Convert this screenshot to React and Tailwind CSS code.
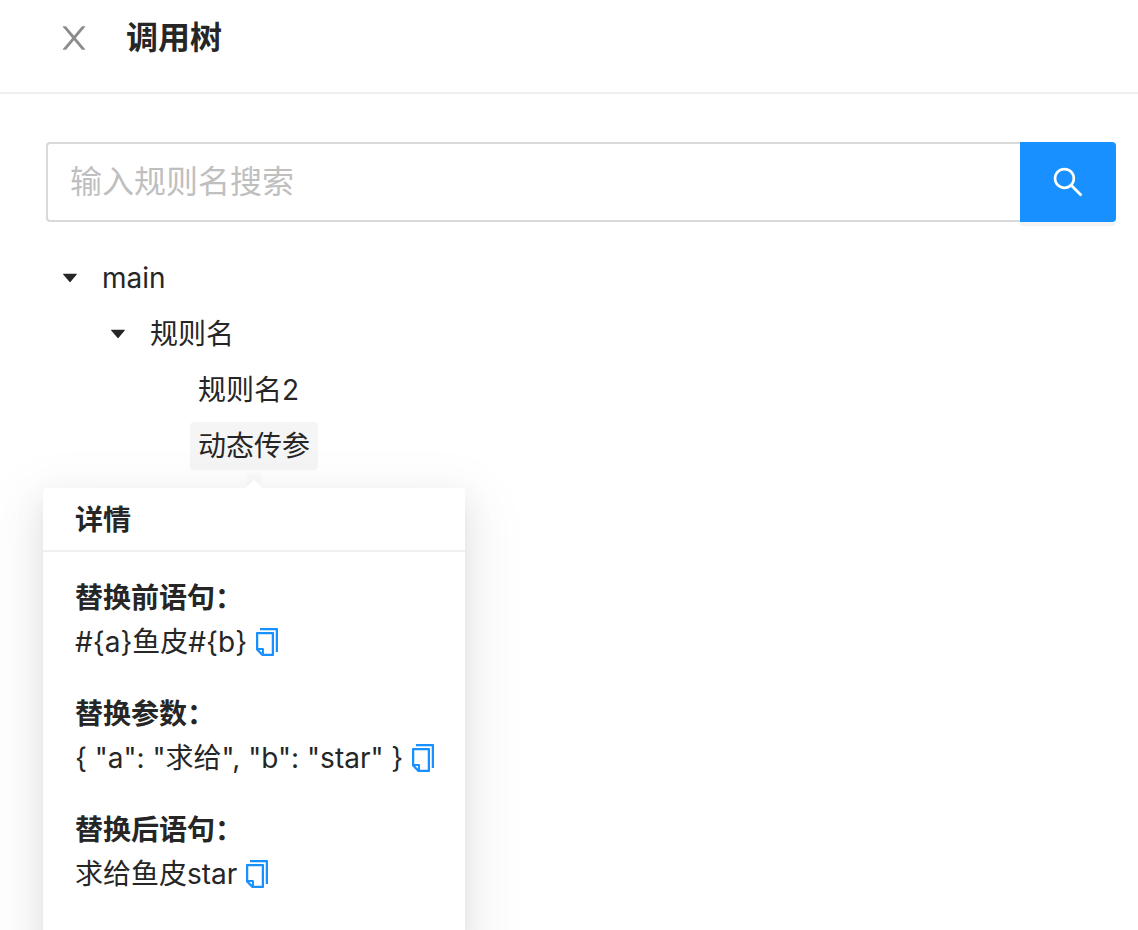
import React, { useState } from 'react';

const treeData = [
  {
    key: 'main',
    title: 'main',
    children: [
      {
        key: 'rule',
        title: '规则名',
        children: [
          { key: 'rule2', title: '规则名2' },
          {
            key: 'dynamic',
            title: '动态传参',
            detail: [
              { label: '替换前语句：', value: '#{a}鱼皮#{b}' },
              { label: '替换参数：', value: '{ "a": "求给", "b": "star" }' },
              { label: '替换后语句：', value: '求给鱼皮star' },
            ],
          },
        ],
      },
    ],
  },
];

function Icon({ d, viewBox = '64 64 896 896', className }) {
  return (
    <svg viewBox={viewBox} fill="currentColor" aria-hidden="true" className={className}>
      <path d={d} />
    </svg>
  );
}

const closePath = 'M563.8 512l262.5-312.9c4.4-5.2.7-13.1-6.1-13.1h-79.8c-4.7 0-9.2 2.1-12.3 5.7L511.6 449.8 295.1 191.7c-3-3.6-7.5-5.7-12.3-5.7H203c-6.8 0-10.5 7.9-6.1 13.1L459.4 512 196.9 824.9A7.95 7.95 0 0 0 203 838h79.8c4.7 0 9.2-2.1 12.3-5.7l216.5-258.1 216.5 258.1c3 3.6 7.5 5.7 12.3 5.7h79.8c6.8 0 10.5-7.9 6.1-13.1L563.8 512z';
const searchPath = 'M909.6 854.5L649.9 594.8C690.2 542.7 712 479 712 412c0-80.2-31.3-155.4-87.9-212.1-56.6-56.7-132-87.9-212.1-87.9s-155.5 31.3-212.1 87.9C143.2 256.5 112 331.8 112 412c0 80.1 31.3 155.5 87.9 212.1C256.5 680.8 331.8 712 412 712c67 0 130.6-21.8 182.7-62l259.7 259.6a8.2 8.2 0 0 0 11.6 0l43.6-43.5a8.2 8.2 0 0 0 0-11.6zM570.4 570.4C528 612.7 471.8 636 412 636s-116-23.3-158.4-65.6C211.3 528 188 471.8 188 412s23.3-116.1 65.6-158.4C296 211.3 352.2 188 412 188s116.1 23.2 158.4 65.6S636 352.2 636 412s-23.3 116.1-65.6 158.4z';
const caretPath = 'M840.4 300H183.6c-19.7 0-30.7 20.8-18.5 35l328.4 380.8c9.4 10.9 27.5 10.9 37 0L858.9 335c12.2-14.2 1.2-35-18.5-35z';
const copyPath = 'M832 64H296c-4.4 0-8 3.6-8 8v56c0 4.4 3.6 8 8 8h496v688c0 4.4 3.6 8 8 8h56c4.4 0 8-3.6 8-8V96c0-17.7-14.3-32-32-32zM704 192H192c-17.7 0-32 14.3-32 32v530.7c0 8.5 3.4 16.6 9.4 22.6l173.3 173.3c2.2 2.2 4.7 4 7.4 5.5v1.9h4.2c3.5 1.3 7.2 2 11 2H704c17.7 0 32-14.3 32-32V224c0-17.7-14.3-32-32-32zM350 856.2L263.9 770H350v86.2zM664 888H414V746c0-22.1-17.9-40-40-40H232V264h432v624z';

function DetailPopover({ detail }) {
  return (
    <div className="absolute top-full left-1/2 z-10 w-[422px] -translate-x-1/2 pt-[18px]">
      {/* arrow */}
      <div className="absolute top-0.5 left-1/2 h-4 w-4 -translate-x-1/2 overflow-hidden">
        <div className="mx-auto mt-2.5 h-3 w-3 rotate-45 bg-white shadow-[-6px_-6px_14px_rgba(0,0,0,0.06)]" />
      </div>
      <div className="rounded bg-white shadow-[0_6px_12px_-8px_rgba(0,0,0,0.12),0_12px_32px_0_rgba(0,0,0,0.08),0_18px_56px_16px_rgba(0,0,0,0.05)]">
        <h2 className="border-b-2 border-[#f0f0f0] px-8 pt-2.5 pb-2 font-semibold">详情</h2>
        <div className="px-8 py-6">
          {detail.map((item) => (
            <div key={item.label} className="mb-7">
              <strong className="block font-semibold">{item.label}</strong>
              <div className="flex items-center gap-1.5 whitespace-nowrap">
                <span>{item.value}</span>
                <button
                  type="button"
                  aria-label="复制"
                  onClick={() => navigator.clipboard?.writeText(item.value)}
                  className="shrink-0 cursor-pointer text-[#1890ff]"
                >
                  <Icon d={copyPath} className="h-7 w-7" />
                </button>
              </div>
            </div>
          ))}
        </div>
      </div>
    </div>
  );
}

function TreeNode({ node, activeKey, onSelect }) {
  const [expanded, setExpanded] = useState(true);
  const active = node.key === activeKey;

  return (
    <li>
      <div className="mb-2 flex h-12 items-center">
        {node.children ? (
          <button
            type="button"
            aria-label={node.title}
            aria-expanded={expanded}
            onClick={() => setExpanded(!expanded)}
            className="flex h-12 w-12 cursor-pointer items-center justify-center"
          >
            <Icon d={caretPath} viewBox="0 0 1024 1024" className={expanded ? 'h-5 w-5' : 'h-5 w-5 -rotate-90'} />
          </button>
        ) : (
          <span className="w-12" />
        )}
        <div className="relative">
          <button
            type="button"
            onClick={() => onSelect(node.key)}
            className={`h-12 cursor-pointer rounded px-2 leading-12 ${active ? 'bg-[#f5f5f5]' : ''}`}
          >
            {node.title}
          </button>
          {active && node.detail && <DetailPopover detail={node.detail} />}
        </div>
      </div>
      {node.children && expanded && (
        <ul className="pl-12">
          {node.children.map((child) => (
            <TreeNode key={child.key} node={child} activeKey={activeKey} onSelect={onSelect} />
          ))}
        </ul>
      )}
    </li>
  );
}

function App() {
  const [keyword, setKeyword] = useState('');
  const [activeKey, setActiveKey] = useState('dynamic');

  return (
    <div className="min-h-screen overflow-hidden bg-white font-[Inter,'Noto_Sans_CJK_SC',sans-serif] text-[28px] leading-11 text-[#262626]">
      <header className="flex items-center gap-9 border-b-2 border-[#f0f0f0] px-[58px] pt-4 pb-8">
        <button type="button" aria-label="关闭" className="cursor-pointer text-[#8c8c8c]">
          <Icon d={closePath} className="h-8 w-8" />
        </button>
        <h1 className="text-[32px] leading-11 font-semibold">调用树</h1>
      </header>
      <main className="pt-12 pr-[22px] pl-[46px]">
        <form className="flex h-20" onSubmit={(e) => e.preventDefault()}>
          <input
            type="text"
            aria-label="输入规则名搜索"
            placeholder="输入规则名搜索"
            value={keyword}
            onChange={(e) => setKeyword(e.target.value)}
            className="min-w-0 flex-1 rounded-l border-2 border-r-0 border-[#d9d9d9] px-[22px] text-[32px] outline-none placeholder:text-[#bfbfbf]"
          />
          <button
            type="submit"
            aria-label="搜索"
            className="flex w-24 cursor-pointer items-center justify-center rounded-r bg-[#1890ff] text-white shadow-[0_4px_0_rgba(0,0,0,0.045)]"
          >
            <Icon d={searchPath} className="h-8 w-8" />
          </button>
        </form>
        <ul className="mt-8">
          {treeData.map((node) => (
            <TreeNode key={node.key} node={node} activeKey={activeKey} onSelect={setActiveKey} />
          ))}
        </ul>
      </main>
    </div>
  );
}

export default App;
